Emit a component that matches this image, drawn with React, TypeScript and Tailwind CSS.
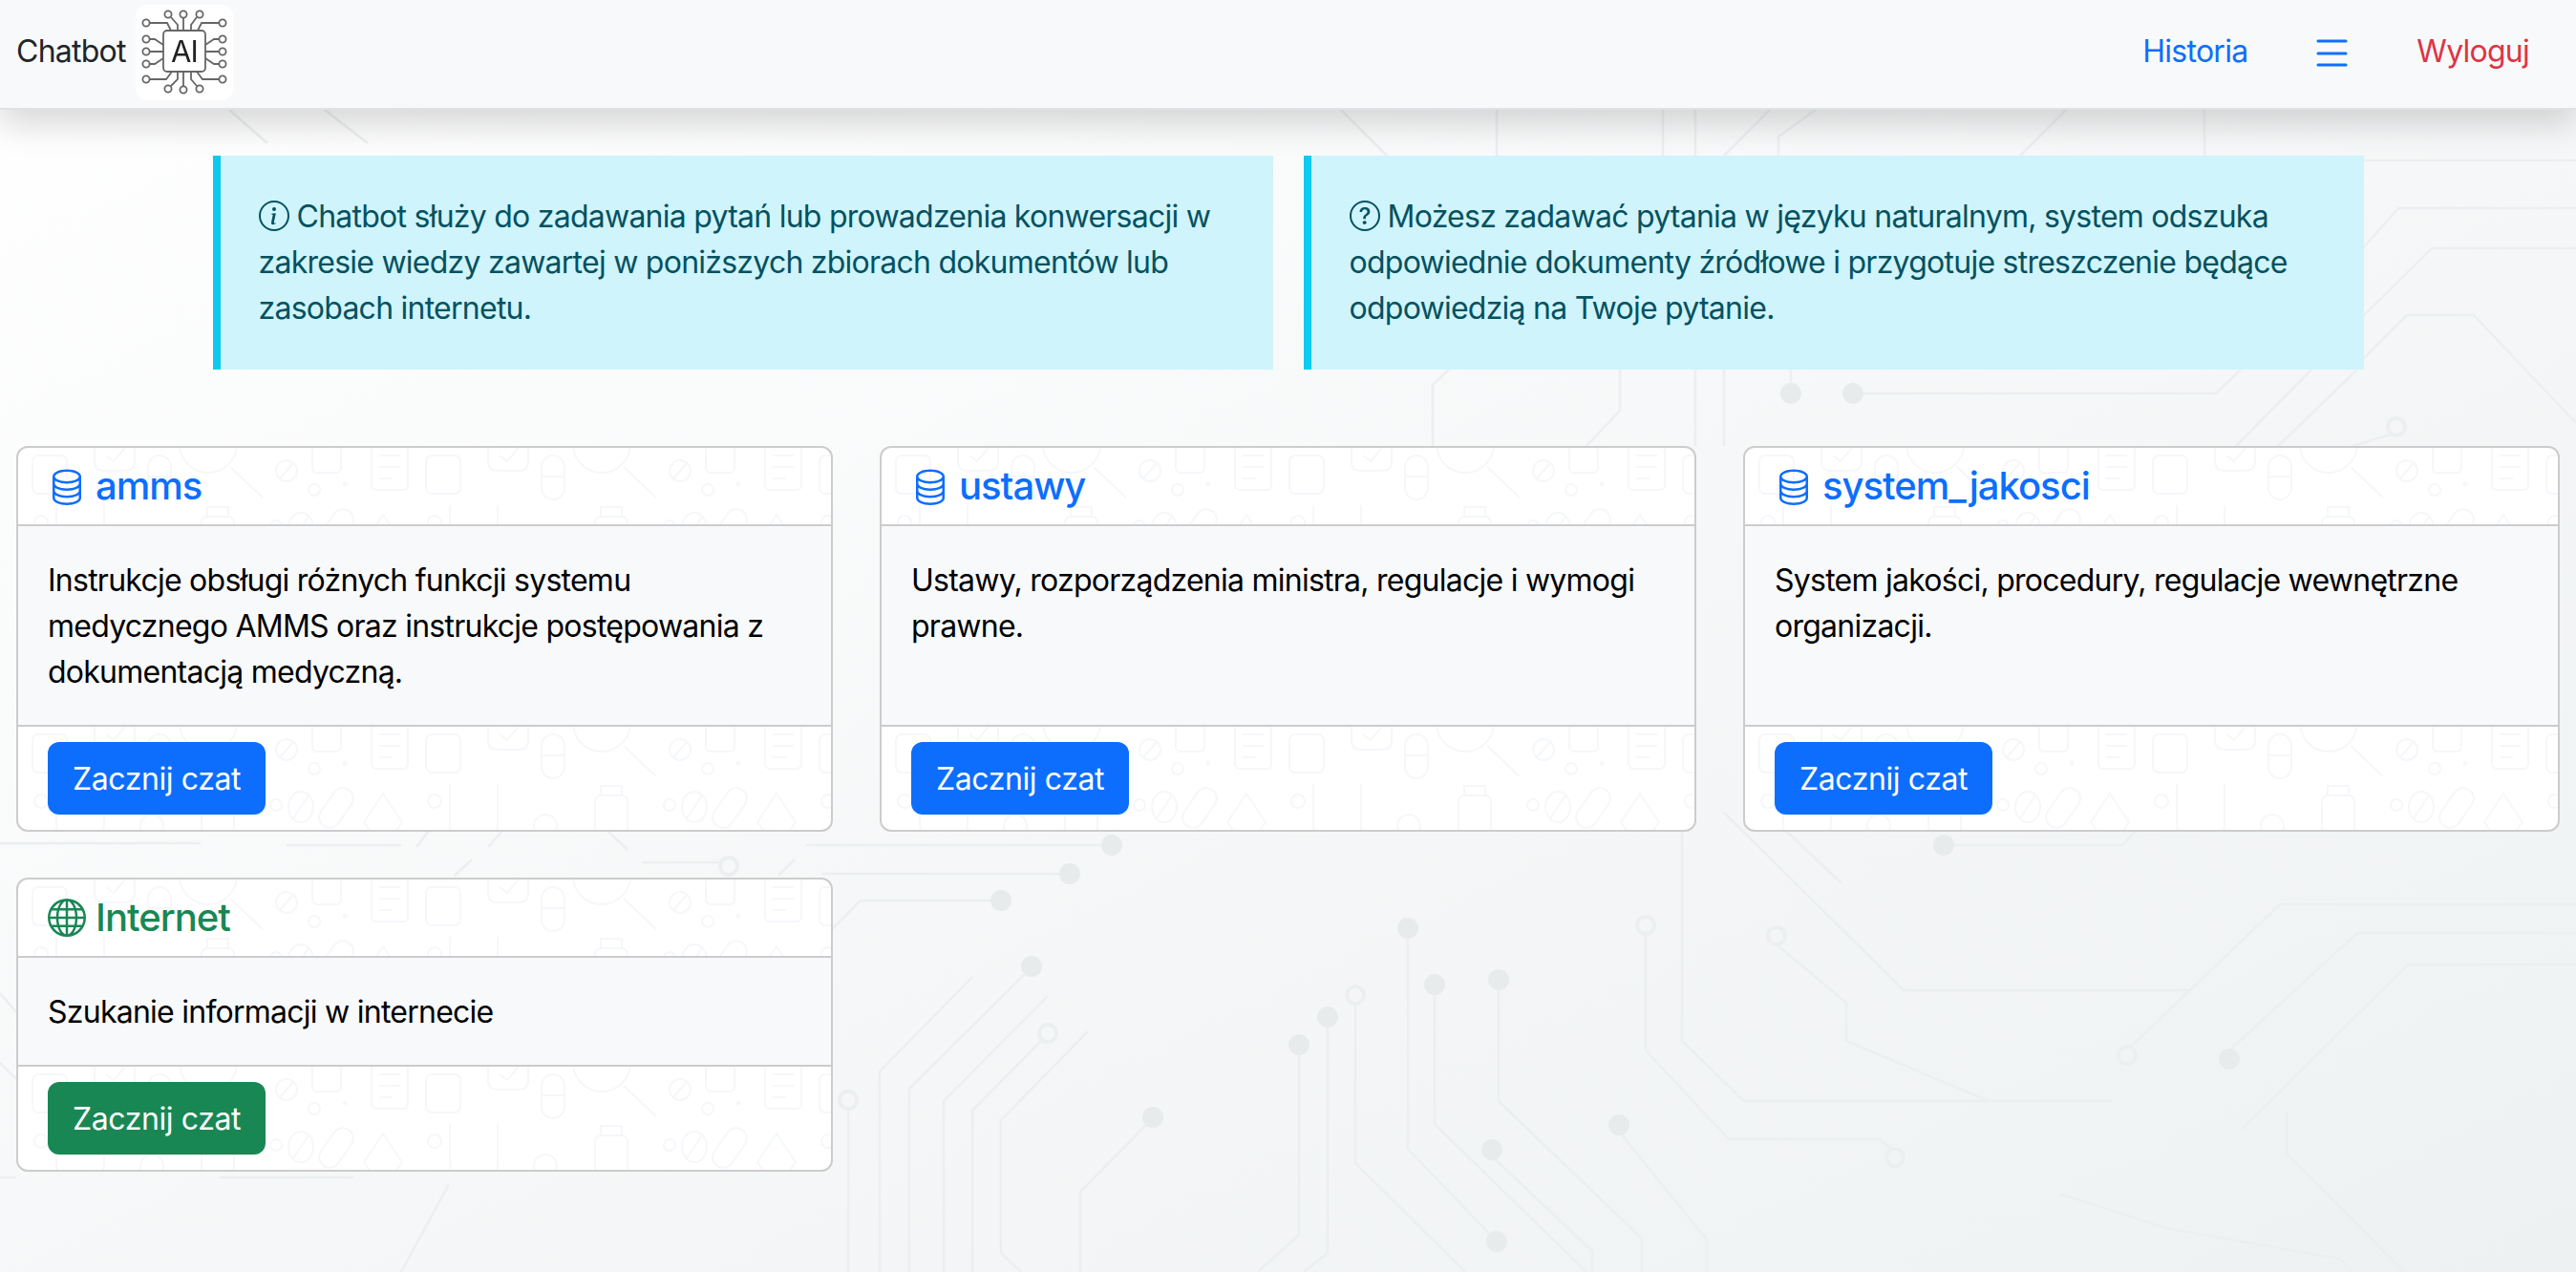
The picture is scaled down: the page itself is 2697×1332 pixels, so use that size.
import { useId } from 'react';
import { BsDatabase, BsGlobe, BsInfoCircle, BsQuestionCircle } from 'react-icons/bs';

// circuit traces of the page background, in page pixels
const TRACES = [
  'M0 883H210', 'M300 885H420', 'M436 887L448 871', 'M511 887L525 871', 'M637 871L657 890', 'M672 903H755',
  'M476 917L494 900', 'M815 917L832 900', 'M844 885H1153', 'M860 915H1109', 'M871 973L901 943H1037',
  'M952 1332V1140L1073 1020', 'M921 1332V1122L1018 1023', 'M988 1332V1153L1097 1043',
  'M1018 1332V1163L1090 1090', 'M1069 1332L1048 1312V1173L1139 1080', 'M888 1332V1161', 'M1131 1332V1248L1200 1178',
  'M1317 1332L1360 1293V1100', 'M1365 1332L1390 1312V1075', 'M1534 1332L1419 1218V1051', 'M1567 1300L1474 1203V980',
  'M1661 1332L1502 1177V1040', 'M1719 1332V1297L1569 1153V1035', 'M1667 1332V1310L1561 1210', 'M1787 1332V1298L1695 1185',
  'M1761 870V1090L1826 1153H2211', 'M1804 850L1993 1037H2294', 'M1870 870L1928 925',
  'M1860 989L1933 1050V1090L2080 1152', 'M1723 978V1100L1810 1193H1968L1980 1204',
  'M2236 870L2222 885H2044', 'M2231 1096L2387 947H2697', 'M2334 1100L2468 977H2697', 'M2347 1183L2521 1010H2697',
  'M2394 1163V1208L2517 1332', 'M2156 1250L2271 1287L2450 1318L2463 1332',
  'M1404 115L1452 163', 'M1567 115V163', 'M1741 115V163', 'M1775 115V163', 'M2308 115V163', 'M1853 115L1805 163',
  'M1901 115L1862 143V163', 'M2163 115L2115 163', 'M240 115L280 150', 'M340 115L385 150',
  'M2474 168H2697', 'M2474 260L2511 218H2697', 'M2472 333L2546 260H2697', 'M2463 387L2520 330H2590L2697 443',
  'M1875 387V402', 'M1949 412H2320L2346 387', 'M2420 387L2341 467', 'M2468 387L2385 467', 'M2463 467L2503 455',
  'M1517 387L1500 403V467', 'M1696 387V430L1661 467', 'M1775 387V467', 'M1805 387V467',
  'M0 1113L17 1130', 'M0 1040L17 1060', 'M230 1233H370', 'M420 1332L470 1240', 'M0 1233H17',
];
const FILLED = [
  [1164, 885], [1120, 915], [1048, 943], [1080, 1012], [1207, 1170], [1360, 1094], [1390, 1065], [1474, 972], [1567, 1300],
  [1502, 1031], [1569, 1026], [1562, 1204], [2035, 885], [1695, 1178], [2334, 1109], [1875, 412], [1940, 412],
];
const OPEN = [[1097, 1082], [888, 1152], [1419, 1042], [1860, 980], [1723, 969], [1984, 1212], [2227, 1105], [2509, 447], [763, 907]];

function CircuitBackground() {
  return (
    <svg className="absolute inset-0 h-full w-full" viewBox="0 0 2697 1332" fill="none">
      <g stroke="#eceff0" strokeWidth="2.5" strokeLinejoin="round">
        {TRACES.map((d) => <path key={d} d={d} />)}
        {OPEN.map(([x, y]) => <circle key={`${x}-${y}`} cx={x} cy={y} r="9" strokeWidth="4" />)}
      </g>
      <g fill="#e8ebec">
        {FILLED.map(([x, y]) => <circle key={`${x}-${y}`} cx={x} cy={y} r="11" />)}
      </g>
    </svg>
  );
}

// faint medical doodles behind card header and footer
function MedicalPattern() {
  const id = useId();
  return (
    <svg className="absolute inset-0 h-full w-full" fill="none">
      <defs>
        <pattern id={id} width="412" height="190" patternUnits="userSpaceOnUse">
          <g stroke="#f5f7fa" strokeWidth="2">
            <rect x="15" y="8" width="36" height="40" rx="6" />
            <path d="M80 -4V14Q80 24 90 24H112Q122 24 122 14V-4M92 8L100 14L112 0" />
            <rect x="136" y="8" width="24" height="46" rx="12" />
            <path d="M136 30H160" />
            <circle cx="199" cy="-4" r="30" />
            <path d="M222 20L256 52" />
            <circle cx="281" cy="24" r="11" />
            <path d="M274 32L288 16" />
            <rect x="308" y="-6" width="30" height="32" rx="5" />
            <circle cx="310" cy="44" r="6" />
            <circle cx="342" cy="38" r="1.5" />
            <rect x="370" y="-6" width="38" height="50" rx="5" />
            <path d="M378 8H400M378 20H400M378 32H392" />
            <circle cx="24" cy="78" r="7" />
            <path d="M40 60V100Q40 130 66 130Q90 130 90 100V60" />
            <rect x="192" y="72" width="34" height="40" rx="6" />
            <path d="M198 72V62H220V72" />
            <circle cx="270" cy="82" r="6" />
            <ellipse cx="296" cy="84" rx="13" ry="16" />
            <path d="M288 96L304 72" />
            <rect x="322" y="62" width="22" height="46" rx="11" transform="rotate(35 333 85)" />
            <path d="M382 70L402 100L382 128L362 100Z" />
            <circle cx="140" cy="104" r="12" />
          </g>
        </pattern>
      </defs>
      <rect width="100%" height="100%" fill={`url(#${id})`} />
    </svg>
  );
}

// chip logo next to the app name
function AiLogo() {
  const nodes = [
    [34, 10], [50, 10], [67, 10], [34, 88], [50, 89], [67, 88],
    [11, 19], [11, 36], [11, 49], [11, 62], [11, 78],
    [91, 19], [91, 36], [91, 49], [91, 62], [91, 78],
  ];
  return (
    <div className="mt-[3px] h-[100px] w-[102px] rounded-xl bg-white">
      <svg viewBox="0 0 102 100" className="h-full w-full blur-[0.4px]" fill="none">
        <g stroke="#666" strokeWidth="1.8">
          <path d="M50 14V27M37 13L44 21V27M64 13L58 21V27M15 19H33L37 27M15 36H20L29 42M15 49H29M15 62H20L29 56M15 78H32L38 70" />
          <path d="M87 19H69L65 27M87 36H82L73 42M87 49H73M87 62H82L73 56M87 78H70L64 70" />
          <path d="M50 85V70M37 85L44 78V70M64 85L58 78V70" />
          {nodes.map(([x, y]) => <circle key={`${x}-${y}`} cx={x} cy={y} r="3.6" />)}
          <rect x="29" y="27" width="44" height="43" rx="4" fill="#fff" />
        </g>
        <text x="51" y="60" textAnchor="middle" fontFamily="Inter" fontSize="31" fill="#222">AI</text>
      </svg>
    </div>
  );
}

type CardProps = {
  title: string;
  text: string;
  green?: boolean;
};

function ChatCard({ title, text, green }: CardProps) {
  return (
    <div className="overflow-hidden rounded-xl border-2 border-[#cccccc] bg-white">
      <div className="relative border-b-2 border-[#cccccc] px-[31px] py-4">
        <MedicalPattern />
        <h5 className={`relative flex h-12 items-center gap-[10px] text-[40px] font-medium tracking-[-1px] ${green ? 'text-[#198754]' : 'text-[#0d6efd]'}`}>
          {green ? <BsGlobe className="h-10 w-10" /> : <BsDatabase className="h-10 w-10" />}
          {title}
        </h5>
      </div>
      <div className="flex-1 bg-[#f8f9fb] px-[31px] pt-[33px] pb-[31px] text-black">
        <p className={green ? '' : 'h-36'}>{text}</p>
      </div>
      <div className="relative border-t-2 border-[#cccccc] px-[31px] py-4">
        <MedicalPattern />
        <button className={`relative h-[76px] w-[228px] rounded-xl pt-[2px] tracking-[-0.4px] text-white ${green ? 'bg-[#198754]' : 'bg-[#0d6efd]'}`}>
          Zacznij czat
        </button>
      </div>
    </div>
  );
}

export default function App() {
  return (
    <div className="relative h-screen overflow-hidden bg-gradient-to-br from-white to-[#eef1f2] font-['Inter',sans-serif] text-[32px] leading-[48px] tracking-[-0.75px] text-[#212529]">
      <CircuitBackground />

      <nav className="relative flex h-[115px] items-center justify-between border-b-2 border-[#dee2e6] bg-[#f8f9fa] pr-[49px] pb-[6px] pl-[17px] shadow-[0_16px_32px_rgba(0,0,0,0.15)]">
        <div className="flex items-center gap-[10px]">
          <span>Chatbot</span>
          <AiLogo />
        </div>
        <div className="flex items-center gap-[72px]">
          <a className="text-[#0d6efd]">Historia</a>
          <svg className="mt-[5px]" width="33" height="30" viewBox="0 0 33 30" fill="none" stroke="#0d6efd" strokeWidth="3" strokeLinecap="round">
            <path d="M2 2H31M2 15H31M2 27H31" />
          </svg>
          <a className="text-[#dc3545]">Wyloguj</a>
        </div>
      </nav>

      <main className="relative">
        <div className="mx-auto mt-12 flex w-[2252px] gap-8">
          <div className="flex-1 border-l-8 border-[#0dcaf0] bg-[#cff4fc] py-10 pr-10 pl-10 text-[#055160]">
            <BsInfoCircle className="mr-2 inline h-8 w-8 align-[-4px]" />
            Chatbot służy do zadawania pytań lub prowadzenia konwersacji w zakresie wiedzy zawartej w poniższych zbiorach dokumentów lub zasobach internetu.
          </div>
          <div className="flex-1 border-l-8 border-[#0dcaf0] bg-[#cff4fc] py-10 pr-10 pl-10 text-[#055160]">
            <BsQuestionCircle className="mr-2 inline h-8 w-8 align-[-4px]" />
            Możesz zadawać pytania w języku naturalnym, system odszuka odpowiednie dokumenty źródłowe i przygotuje streszczenie będące odpowiedzią na Twoje pytanie.
          </div>
        </div>

        <div className="mt-20 grid grid-cols-3 items-start gap-x-[49px] gap-y-[48px] px-[17px]">
          <ChatCard title="amms" text="Instrukcje obsługi różnych funkcji systemu medycznego AMMS oraz instrukcje postępowania z dokumentacją medyczną." />
          <ChatCard title="ustawy" text="Ustawy, rozporządzenia ministra, regulacje i wymogi prawne." />
          <ChatCard title="system_jakosci" text="System jakości, procedury, regulacje wewnętrzne organizacji." />
          <ChatCard green title="Internet" text="Szukanie informacji w internecie" />
        </div>
      </main>
    </div>
  );
}
